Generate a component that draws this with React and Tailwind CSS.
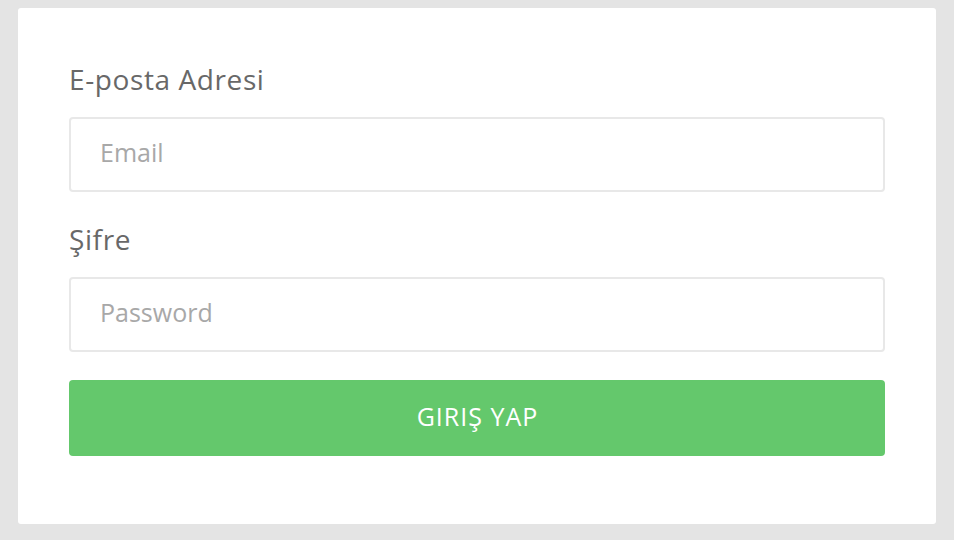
export default function App() {
  return (
    <div className="h-[540px] w-[954px] bg-[#e4e4e4] px-[18px] pt-[8px]" style={{ fontFamily: '"Open Sans", "Liberation Sans", sans-serif' }}>
      <div className="h-[516px] rounded-[3px] bg-white px-[51px] pt-[53px]">
        <label className="block h-[36px] text-[28px] leading-[36px] tracking-[0.6px] text-[#686868]">E-posta Adresi</label>
        <input
          type="email"
          placeholder="Email"
          className="mt-[20px] block h-[75px] w-full rounded-[4px] border-2 border-[#e8e8e8] bg-white px-[29px] pb-[6px] text-[25px] text-[#555] outline-none placeholder:text-[#a8a8a8]"
        />
        <label className="mt-[29px] block h-[36px] text-[28px] leading-[36px] tracking-[0.6px] text-[#686868]">Şifre</label>
        <input
          type="password"
          placeholder="Password"
          className="mt-[20px] block h-[75px] w-full rounded-[4px] border-2 border-[#e8e8e8] bg-white px-[29px] pb-[6px] text-[25px] text-[#555] outline-none placeholder:text-[#a8a8a8]"
        />
        <button className="mt-[28px] block h-[76px] w-full rounded-[4px] bg-[#64c86c] pb-[2px] pl-[1px] text-[25px] tracking-[1px] text-white">
          GIRIŞ YAP
        </button>
      </div>
    </div>
  );
}
